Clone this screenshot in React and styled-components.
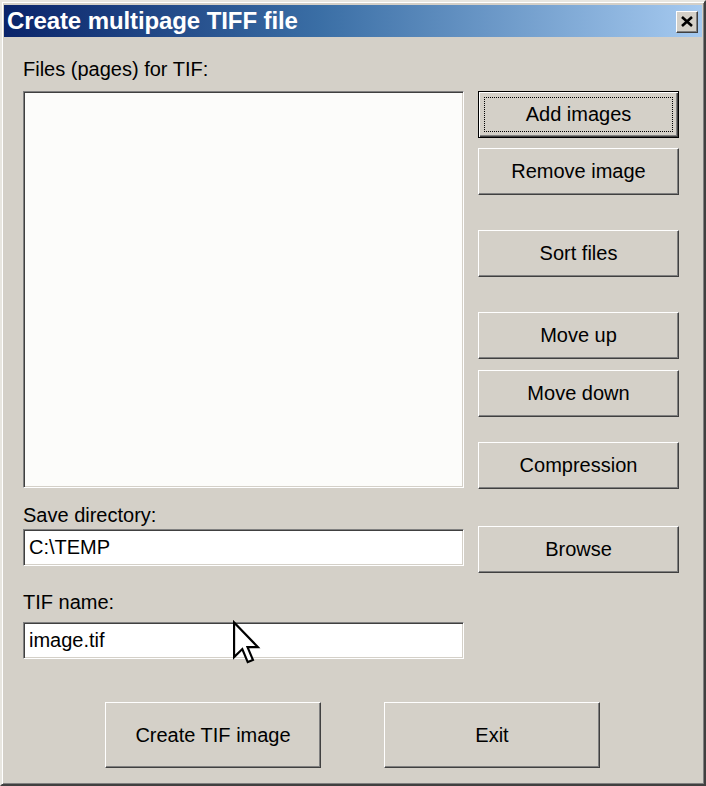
import React from "react";
import styled, { createGlobalStyle } from "styled-components";

const GlobalStyle = createGlobalStyle`
  html, body {
    margin: 0;
    padding: 0;
    background: #d4d0c8;
  }
  body {
    font-family: "Liberation Sans", Arial, sans-serif;
  }
`;

const Window = styled.div`
  box-sizing: border-box;
  width: 706px;
  height: 786px;
  background: #d4d0c8;
  border-style: solid;
  border-width: 2px;
  border-color: #e8e6e0 #404040 #404040 #e8e6e0;
  box-shadow: inset 1px 1px 0 #ffffff, inset -1px -1px 0 #808080;
  padding: 2px;
  display: flex;
  flex-direction: column;
  position: relative;
`;

const TitleBar = styled.div`
  height: 32px;
  margin-top: 1px;
  background: linear-gradient(to right, #0a246a 0%, #3a6ea5 45%, #a6caf0 100%);
  display: flex;
  align-items: center;
  justify-content: space-between;
  padding: 0 4px 0 3px;
`;

const Title = styled.div`
  color: #ffffff;
  font-weight: bold;
  font-size: 24px;
  letter-spacing: -0.1px;
`;

const CloseButton = styled.div`
  box-sizing: border-box;
  width: 22px;
  height: 22px;
  background: #d4d0c8;
  border-style: solid;
  border-width: 1px;
  border-color: #ffffff #404040 #404040 #ffffff;
  box-shadow: inset -1px -1px 0 #808080;
  display: flex;
  align-items: center;
  justify-content: center;
  margin-top: 1px;
`;

const Body = styled.div`
  flex: 1;
  display: flex;
  flex-direction: column;
  padding: 20px 23px 0 19px;
`;

const Main = styled.div`
  display: flex;
  gap: 14px;
`;

const LeftColumn = styled.div`
  width: 441px;
  display: flex;
  flex-direction: column;
`;

const RightColumn = styled.div`
  width: 201px;
  display: flex;
  flex-direction: column;
  padding-top: 34px;
`;

const Label = styled.div`
  font-size: 20px;
  line-height: 24px;
  height: 24px;
  color: #000;
  margin-top: ${p => p.$top || 0}px;
  margin-bottom: ${p => p.$bottom || 0}px;
`;

const Sunken = styled.div`
  box-sizing: border-box;
  background: #ffffff;
  border-style: solid;
  border-width: 1px;
  border-color: #808080 #ffffff #ffffff #808080;
  box-shadow: inset 1px 1px 0 #404040, inset -1px -1px 0 #d4d0c8;
`;

const ListBox = styled(Sunken)`
  height: 397px;
  background: #fcfcfa;
`;

const InputWrap = styled.div`
  position: relative;
`;

const TextField = styled(Sunken)`
  height: 37px;
  display: flex;
  align-items: center;
  padding-left: 5px;
  font-size: 20px;
  color: #000;
`;

const Button = styled.div`
  box-sizing: border-box;
  width: ${p => p.$width || 201}px;
  height: ${p => p.$height || 47}px;
  margin-top: ${p => p.$top || 0}px;
  background: #d4d0c8;
  border-style: solid;
  border-width: 1px;
  border-color: #ffffff #404040 #404040 #ffffff;
  box-shadow: inset -1px -1px 0 #808080;
  display: flex;
  align-items: center;
  justify-content: center;
  font-size: 20px;
  color: #000;
`;

const DefaultButton = styled(Button)`
  border: 1px solid #000;
  box-shadow: inset 1px 1px 0 #ffffff, inset -1px -1px 0 #404040, inset -2px -2px 0 #808080;
  position: relative;
  &::after {
    content: "";
    position: absolute;
    left: 5px;
    top: 5px;
    right: 5px;
    bottom: 5px;
    border: 1px dotted #000;
  }
`;

const ButtonText = styled.span`
  position: relative;
  z-index: 1;
`;

const BottomRow = styled.div`
  display: flex;
  gap: 63px;
  padding-left: 82px;
  margin-top: 43px;
`;

const Cursor = styled.svg`
  position: absolute;
  left: 210px;
  top: -1px;
  width: 26px;
  height: 44px;
  overflow: visible;
`;

const App = () => (
  <>
    <GlobalStyle />
    <Window>
      <TitleBar>
        <Title>Create multipage TIFF file</Title>
        <CloseButton>
          <svg width="12" height="11" viewBox="0 0 12 11">
            <path d="M1 1 L11 10 M11 1 L1 10" stroke="#000" strokeWidth="2.6" />
          </svg>
        </CloseButton>
      </TitleBar>
      <Body>
        <Main>
          <LeftColumn>
            <Label $bottom={10}>Files (pages) for TIF:</Label>
            <ListBox />
            <Label $top={15} $bottom={2}>Save directory:</Label>
            <TextField>C:\TEMP</TextField>
            <Label $top={24} $bottom={8}>TIF name:</Label>
            <InputWrap>
              <TextField>image.tif</TextField>
              <Cursor viewBox="0 0 12 20">
                <path
                  d="M0.5 0.5 L0.5 16.5 L4.3 12.8 L6.8 18.8 L9.2 17.8 L6.7 11.9 L11.5 11.9 Z"
                  fill="#fff"
                  stroke="#000"
                  strokeWidth="1"
                  strokeLinejoin="miter"
                />
              </Cursor>
            </InputWrap>
          </LeftColumn>
          <RightColumn>
            <DefaultButton><ButtonText>Add images</ButtonText></DefaultButton>
            <Button $top={10}>Remove image</Button>
            <Button $top={35}>Sort files</Button>
            <Button $top={35}>Move up</Button>
            <Button $top={11}>Move down</Button>
            <Button $top={25}>Compression</Button>
            <Button $top={37}>Browse</Button>
          </RightColumn>
        </Main>
        <BottomRow>
          <Button $width={216} $height={66}>Create TIF image</Button>
          <Button $width={216} $height={66}>Exit</Button>
        </BottomRow>
      </Body>
    </Window>
  </>
);

export default App;
